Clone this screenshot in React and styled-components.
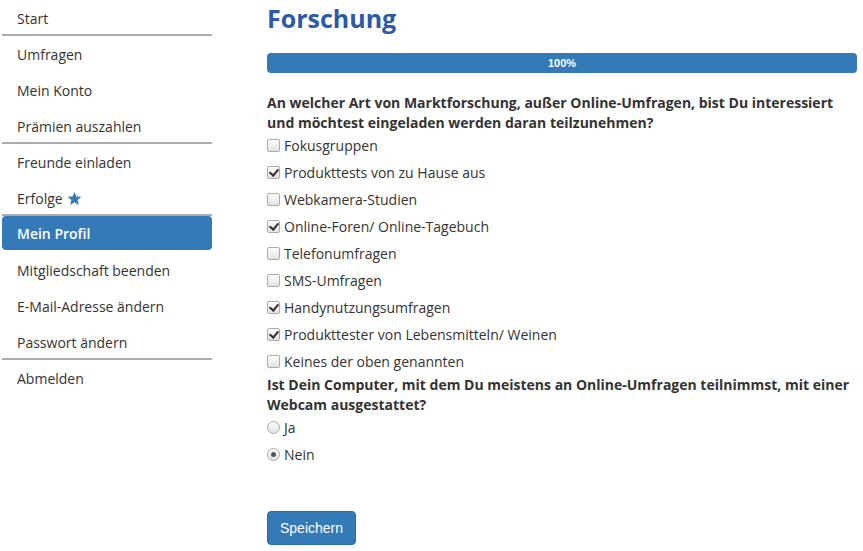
import React from "react";
import styled, { createGlobalStyle } from "styled-components";

const GlobalStyle = createGlobalStyle`
  body {
    margin: 0;
    font-family: "Open Sans", "Liberation Sans", sans-serif;
    color: #333;
    background: #fff;
  }
`;

const Page = styled.div`
  display: flex;
  align-items: flex-start;
  padding-left: 2px;
`;

const Sidebar = styled.ul`
  list-style: none;
  margin: 0;
  padding: 0;
  width: 210px;
  flex-shrink: 0;
`;

const NavItem = styled.li`
  box-sizing: border-box;
  height: ${(p) => (p.$active ? "34px" : "36px")};
  margin-bottom: ${(p) => (p.$active ? "2px" : "0")};
  display: flex;
  align-items: center;
  gap: 4px;
  padding-left: 15px;
  font-size: 14px;
  font-weight: ${(p) => (p.$active ? 600 : 400)};
  color: ${(p) => (p.$active ? "#fff" : "#333")};
  background: ${(p) => (p.$active ? "#337ab7" : "transparent")};
  border-radius: ${(p) => (p.$active ? "4px" : "0")};
  border-bottom: ${(p) => (p.$sep ? "2px solid #aaa" : "none")};
  padding-top: ${(p) => (p.$sep ? "2px" : "0")};
`;

const Main = styled.main`
  margin-left: 55px;
  width: 590px;
`;

const Title = styled.h1`
  margin: 0;
  font-size: 25px;
  line-height: 37px;
  font-weight: 700;
  color: #2c5aa8;
`;

const Progress = styled.div`
  margin: 16px 0 20px;
  height: 20px;
  border-radius: 4px;
  background: #337ab7;
  color: #fff;
  font-family: "Liberation Sans", Arial, sans-serif;
  font-size: 11px;
  font-weight: 700;
  display: flex;
  align-items: center;
  justify-content: center;
`;

const Question = styled.p`
  margin: 0;
  font-size: 14px;
  line-height: 19.5px;
  font-weight: 700;
  color: #333;
`;

const Option = styled.label`
  height: 27px;
  display: flex;
  align-items: center;
  gap: 4px;
  font-size: 14px;
  color: #333;
`;

const Check = styled.input`
  appearance: none;
  margin: 0;
  width: 13px;
  height: 13px;
  box-sizing: border-box;
  border: 1px solid #ababab;
  border-radius: ${(p) => (p.type === "radio" ? "50%" : "2px")};
  background: linear-gradient(#fdfdfd, #e2e2e2);
  position: relative;
  flex-shrink: 0;

  &:checked::after {
    content: "";
    position: absolute;
    ${(p) =>
      p.type === "radio"
        ? `
      left: 3px; top: 3px; width: 5px; height: 5px;
      border-radius: 50%; background: #555;
    `
        : `
      left: 3px; top: 0px; width: 4px; height: 7px;
      border: solid #333; border-width: 0 2px 2px 0;
      transform: rotate(40deg);
    `}
  }
`;

const Button = styled.button`
  margin-top: 43px;
  width: 89px;
  height: 34px;
  border: 1px solid #2e6da4;
  border-radius: 4px;
  background: #337ab7;
  color: #fff;
  font-family: "Liberation Sans", Arial, sans-serif;
  font-size: 14px;
`;

const Star = () => (
  <svg width="15" height="15" viewBox="0 0 24 24">
    <path
      fill="#337ab7"
      d="M12 1.5l3.1 7.2 7.8.6-5.9 5.2 1.8 7.7L12 18.1l-6.8 4.1 1.8-7.7-5.9-5.2 7.8-.6z"
    />
  </svg>
);

const nav = [
  { label: "Start", sep: true },
  { label: "Umfragen" },
  { label: "Mein Konto" },
  { label: "Prämien auszahlen", sep: true },
  { label: "Freunde einladen" },
  { label: "Erfolge", star: true, sep: true },
  { label: "Mein Profil", active: true },
  { label: "Mitgliedschaft beenden" },
  { label: "E-Mail-Adresse ändern" },
  { label: "Passwort ändern", sep: true },
  { label: "Abmelden" },
];

const research = [
  ["Fokusgruppen", false],
  ["Produkttests von zu Hause aus", true],
  ["Webkamera-Studien", false],
  ["Online-Foren/ Online-Tagebuch", true],
  ["Telefonumfragen", false],
  ["SMS-Umfragen", false],
  ["Handynutzungsumfragen", true],
  ["Produkttester von Lebensmitteln/ Weinen", true],
  ["Keines der oben genannten", false],
];

export default function App() {
  return (
    <>
      <GlobalStyle />
      <Page>
        <Sidebar>
          {nav.map((n) => (
            <NavItem key={n.label} $sep={n.sep} $active={n.active}>
              {n.label}
              {n.star && <Star />}
            </NavItem>
          ))}
        </Sidebar>
        <Main>
          <Title>Forschung</Title>
          <Progress>100%</Progress>
          <Question>
            An welcher Art von Marktforschung, außer Online-Umfragen, bist Du
            interessiert und möchtest eingeladen werden daran teilzunehmen?
          </Question>
          {research.map(([label, checked]) => (
            <Option key={label}>
              <Check type="checkbox" defaultChecked={checked} />
              {label}
            </Option>
          ))}
          <Question>
            Ist Dein Computer, mit dem Du meistens an Online-Umfragen
            teilnimmst, mit einer Webcam ausgestattet?
          </Question>
          <Option>
            <Check type="radio" name="webcam" />
            Ja
          </Option>
          <Option>
            <Check type="radio" name="webcam" defaultChecked />
            Nein
          </Option>
          <Button>Speichern</Button>
        </Main>
      </Page>
    </>
  );
}
